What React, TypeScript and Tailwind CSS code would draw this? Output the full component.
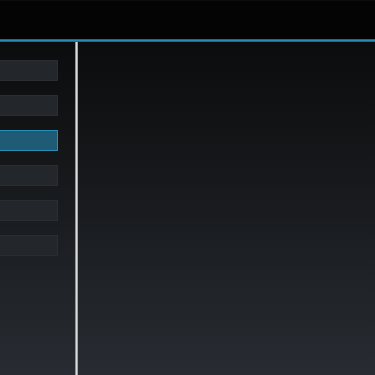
const items = [0, 1, 2, 3, 4, 5];

export default function App() {
  return (
    <div className="w-[375px] h-[375px] flex flex-col bg-black overflow-hidden">
      {/* top bar */}
      <div className="h-[39px] bg-[#040404] border-t border-[#0c0c0c]" />
      <div className="h-[3px] bg-[#2a8ab1] border-y border-[#1f6a88]" />

      <div className="flex-1 flex bg-gradient-to-b from-[#0b0c0d] to-[#282c32]">
        {/* sidebar */}
        <div className="w-[75px] pt-[18px] flex flex-col gap-[14px]">
          {items.map((i) => (
            <div
              key={i}
              className={
                i === 2
                  ? '-ml-px w-[59px] h-[21px] bg-[#205b76] border border-[#2a8db5]'
                  : '-ml-px w-[59px] h-[21px] bg-[#23272b] border border-[#2a2d31]'
              }
            />
          ))}
        </div>
        {/* divider */}
        <div className="w-[3px] bg-gradient-to-r from-[#6e6e6e] via-[#dcdcdc] to-[#8a8a8a]" />
        <div className="flex-1" />
      </div>
    </div>
  );
}
